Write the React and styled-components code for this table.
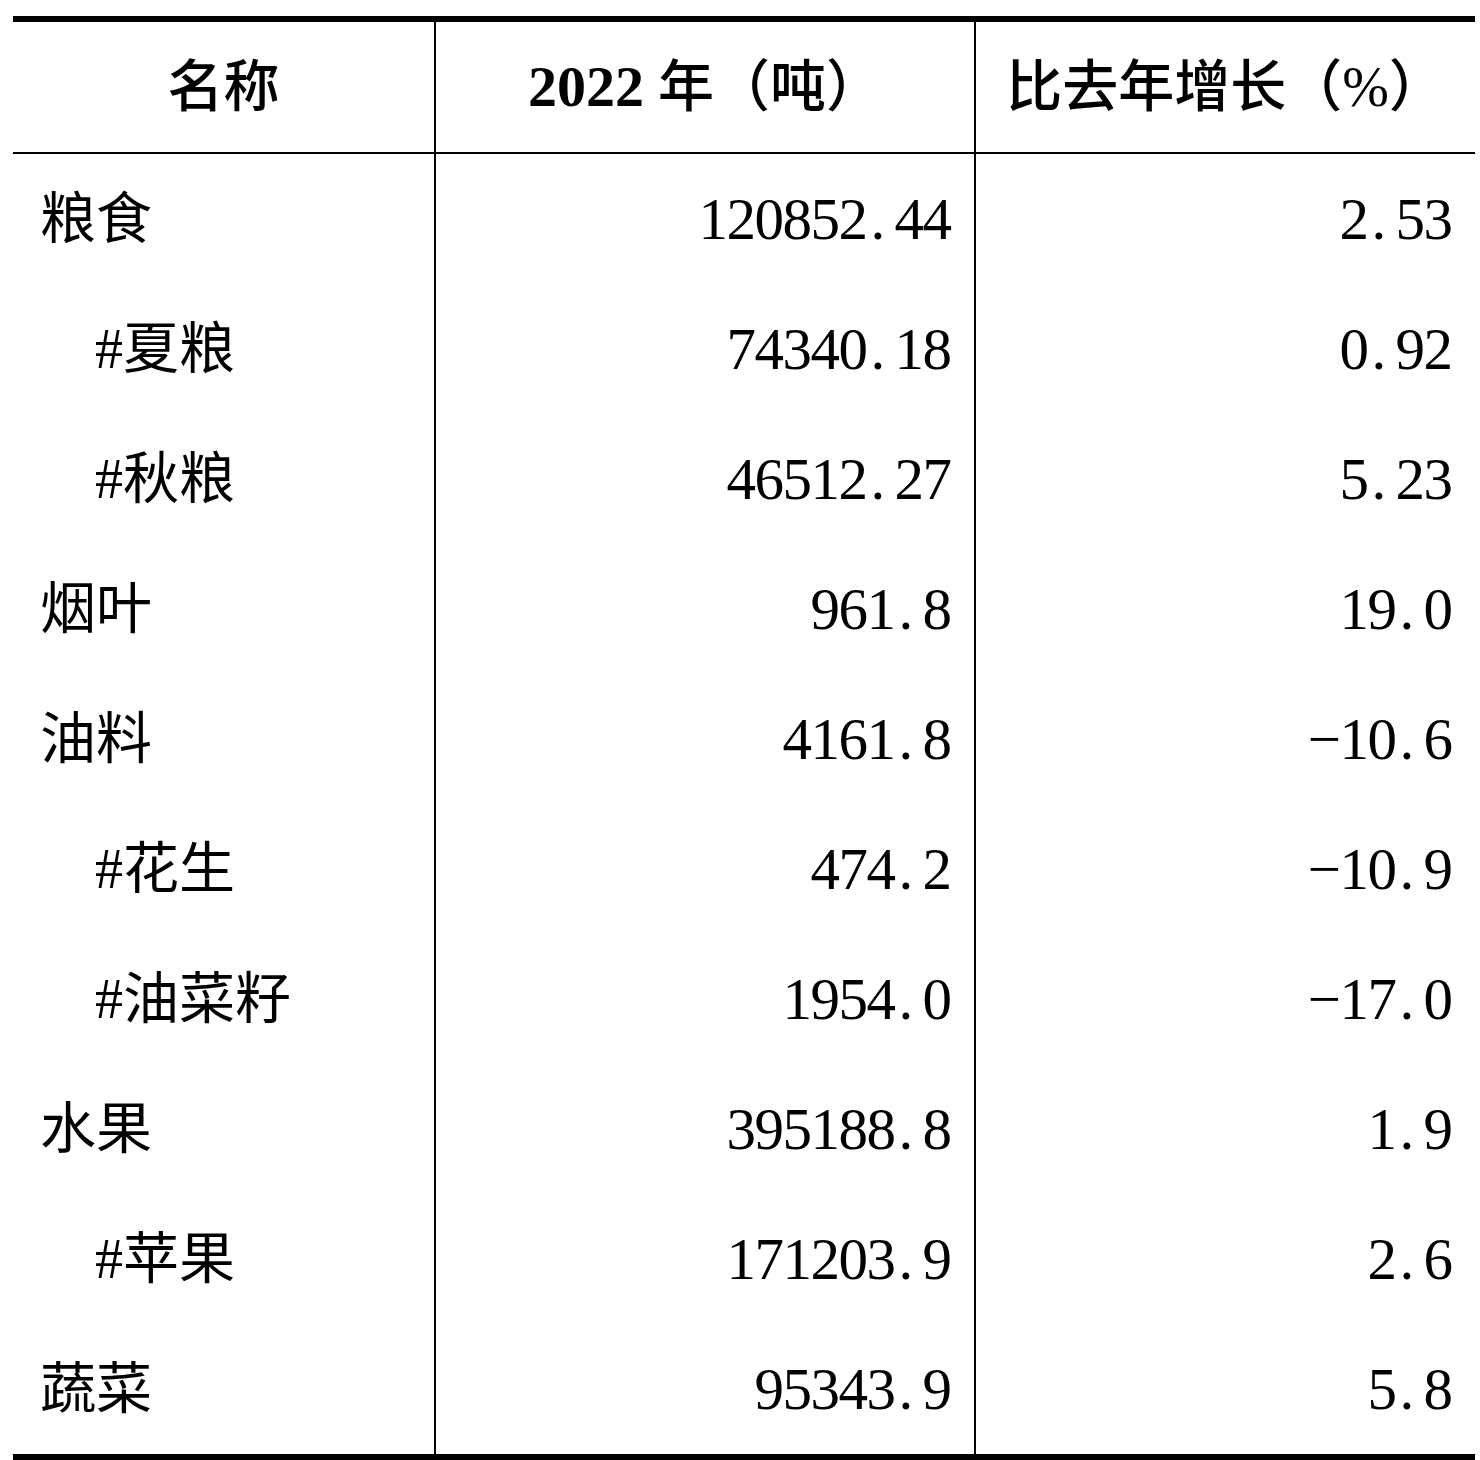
import React from 'react';
import styled, { createGlobalStyle } from 'styled-components';

const GlobalStyle = createGlobalStyle`
    html, body {
        margin: 0;
        padding: 0;
        background: #fff;
    }
    body {
        font-family: "Liberation Serif", "Noto Sans CJK SC", serif;
        color: #000;
    }
`;

const Sheet = styled.div`
    width: 1462px;
    margin: 16px 0 0 13px;
    border-top: 6px solid #000;
    border-bottom: 6px solid #000;
    font-size: 56px;
    line-height: 1;
`;

const Row = styled.div`
    display: grid;
    grid-template-columns: 421px 540px 501px;
    height: ${props => (props.$head ? '132px' : '130px')};
    box-sizing: border-box;
    border-bottom: ${props => (props.$head ? '2px solid #000' : 'none')};
`;

const Cell = styled.div`
    box-sizing: border-box;
    display: flex;
    align-items: center;
    justify-content: ${props => props.$align || 'flex-start'};
    border-left: ${props => (props.$divider ? '2px solid #000' : 'none')};
    padding: ${props => props.$pad || '0'};
    white-space: nowrap;
`;

const HeadText = styled.span`
    font-weight: 500;
`;

const HeadFigure = styled.span`
    font-weight: 700;
    font-size: 58px;
`;

const Name = styled.span`
    padding-left: ${props => (props.$sub ? '55px' : '0')};
`;

const Figure = styled.span`
    font-size: 59px;
    letter-spacing: -1.5px;
    margin-right: -1.5px;
`;

const Dot = styled.span`
    display: inline-block;
    width: 28px;
    padding-left: 4px;
    box-sizing: border-box;
    text-align: left;
    letter-spacing: 0;
`;

const rows = [
    { name: '粮食', tons: '120852.44', change: '2.53' },
    { name: '#夏粮', tons: '74340.18', change: '0.92', sub: true },
    { name: '#秋粮', tons: '46512.27', change: '5.23', sub: true },
    { name: '烟叶', tons: '961.8', change: '19.0' },
    { name: '油料', tons: '4161.8', change: '−10.6' },
    { name: '#花生', tons: '474.2', change: '−10.9', sub: true },
    { name: '#油菜籽', tons: '1954.0', change: '−17.0', sub: true },
    { name: '水果', tons: '395188.8', change: '1.9' },
    { name: '#苹果', tons: '171203.9', change: '2.6', sub: true },
    { name: '蔬菜', tons: '95343.9', change: '5.8' },
];

const Num = ({ value }) => {
    const [whole, frac] = value.split('.');
    return (
        <Figure>
            {whole}
            {frac !== undefined && <Dot>.</Dot>}
            {frac}
        </Figure>
    );
};

export default function App() {
    return (
        <>
            <GlobalStyle />
            <Sheet>
                <Row $head>
                    <Cell $align="center">
                        <HeadText>名称</HeadText>
                    </Cell>
                    <Cell $divider $align="center">
                        <HeadText>
                            <HeadFigure>2022</HeadFigure> 年（吨）
                        </HeadText>
                    </Cell>
                    <Cell $divider $align="center">
                        <HeadText>比去年增长（%）</HeadText>
                    </Cell>
                </Row>
                {rows.map(r => (
                    <Row key={r.name}>
                        <Cell $pad="0 0 0 27px">
                            <Name $sub={r.sub}>{r.name}</Name>
                        </Cell>
                        <Cell $divider $align="flex-end" $pad="0 25px 0 0">
                            <Num value={r.tons} />
                        </Cell>
                        <Cell $divider $align="flex-end" $pad="0 25px 0 0">
                            <Num value={r.change} />
                        </Cell>
                    </Row>
                ))}
            </Sheet>
        </>
    );
}
